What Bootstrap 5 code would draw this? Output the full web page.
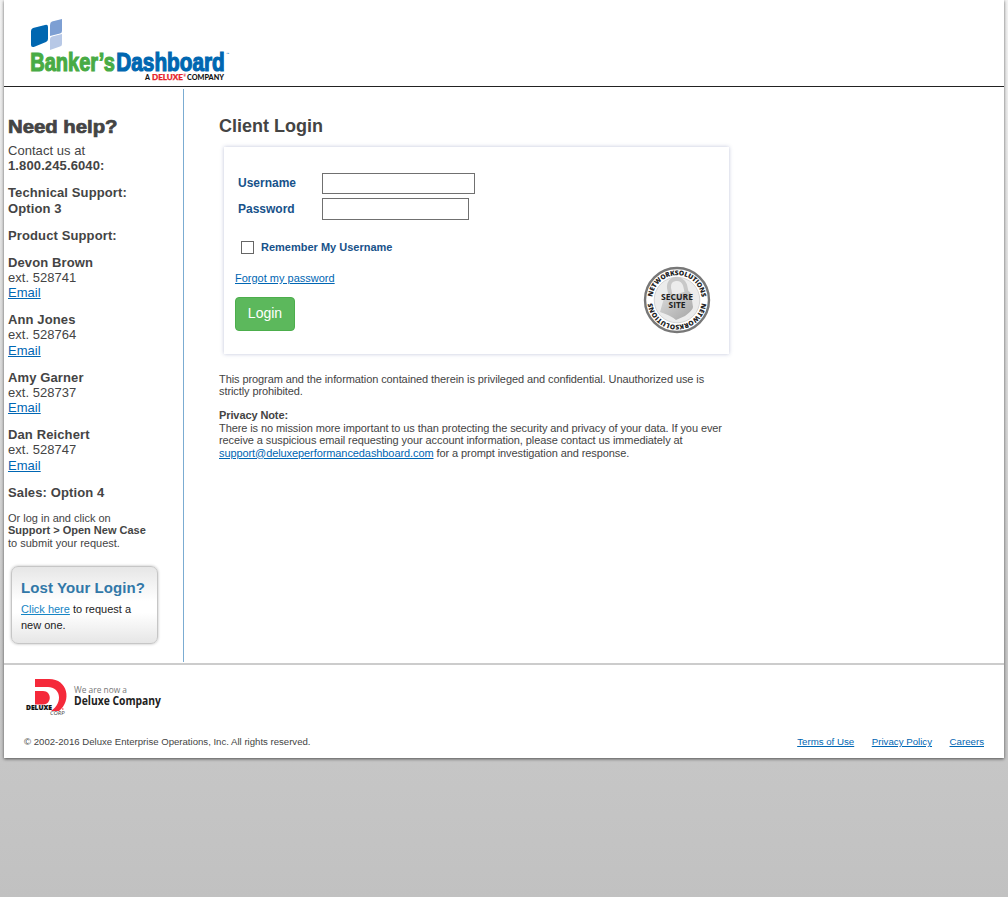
<!DOCTYPE html>
<html lang="en">
<head>
<meta charset="utf-8">
<meta name="viewport" content="width=device-width, initial-scale=1">
<title>Banker's Dashboard - Client Login</title>
<link href="https://cdn.jsdelivr.net/npm/bootstrap@5.3.0/dist/css/bootstrap.min.css" rel="stylesheet">
<style>
html{height:100%}
body{min-height:897px;font-family:"Liberation Sans",Arial,sans-serif;font-size:13px;line-height:15.2px;color:#444;background:linear-gradient(#f2f2f2 0,#c8c8c8 650px,#c6c6c6 760px,#c1c1c1 897px)}
a{color:#0066b3}
p{margin:0 0 12px}
.page{width:1000px;height:758px;margin:0 4px;box-shadow:0 1px 3px rgba(0,0,0,.6)}
.top{height:87px;border-bottom:1px solid #222}
.main{height:576px}
.side{width:180px;margin:2px 0 1px;padding:29px 0 0 4px;border-right:1px solid #7bacd2}
.side h1{line-height:18px;margin:0 0 5px}
.side p{margin-bottom:11.9px}
.side p:not(.tiny) b{letter-spacing:.12px}
.side p:not(.tiny){letter-spacing:.04px}
.tiny{font-size:11px;line-height:12.6px}
.lost{width:147px;height:78px;margin:16.2px 0 0 3px;padding:12px 0 0 9px;border:1px solid #c6c6c6;border-radius:7px;background:linear-gradient(#e6e6e6,#fff 45%,#fff 60%,#e6e6e6);box-shadow:0 0 3px rgba(0,0,0,.28);font-size:11px;line-height:16px;color:#222}
.lost h2{font-size:15px;line-height:18px;font-weight:700;color:#3278a8;margin:0 0 4px;letter-spacing:.08px;white-space:nowrap}
.lost a{color:#1685c4}
.content{padding:30px 0 0 35px}
.content h2{font-size:18px;font-weight:700;line-height:18px;margin:0 0 12px}
.loginbox{width:505px;height:207px;margin-left:5px;padding:26px 18px 0 11px;box-shadow:0 0 4px rgba(60,75,140,.32)}
.loginbox label{color:#17528a;font-weight:700;font-size:12px;line-height:20px;width:87px;padding-left:3px}
.loginbox .pw{line-height:22px}
.field{border:1px solid #707070;background:#fff;padding:0;border-radius:0}
.field-user{width:153px;height:21px}
.field-pass{width:147px;height:22px}
.loginbox label.remember{font-size:11px;width:auto;padding-left:7px}
.check{appearance:none;width:13px;height:13px;border:1px solid #666;background:#fff;margin:0 0 0 6px}
.remember-row{margin-top:17px}
.forgot{margin-top:14px;font-size:11px}
.btn-login{width:60px;height:34px;margin-top:11px;padding:0 0 2px;font-size:14px;line-height:20px;color:#fff;background:#5cb85c;border-color:#4cae4c;border-radius:4px}
.seal{margin-top:93px}
.notice{width:512px;margin-top:19px;font-size:11px;line-height:12.4px;letter-spacing:-.088px}
.notice p{margin-bottom:11.6px}
.notice b{letter-spacing:-.1px}
.foot{height:95px;border-top:2px solid #ccc;padding:10px 20px 0}
.legal{font-size:9.6px;line-height:12px;margin-top:21px}
.legal nav{gap:17.500px;font-size:9.7px}
</style>
</head>
<body>
<div class="page bg-white">
  <header class="top">
    <svg width="240" height="86" class="d-block" role="img" aria-label="Banker's Dashboard">
      <path d="M27 31Q27 29 29 28L41 25Q44 24 44 27V39Q44 41 42 42L31 46.500Q27 48 27 45Z" fill="#0067b1"/>
      <path d="M46 25Q46 22 48 21.500L58 19V31Q58 33 56 33.500L46 36Z" fill="#7d9fd3"/>
      <path d="M46 39Q46 37 48 36.500L58 34V44Q58 46 56 46.500L46 50Z" fill="#b7c8e6"/>
      <g font-family="'Liberation Sans Narrow','Liberation Sans',sans-serif" font-weight="700" font-size="25.500" stroke-width="1.200">
        <text x="26.300" y="70.500" fill="#48ab45" stroke="#48ab45" textLength="84.500" lengthAdjust="spacingAndGlyphs">Banker’s</text>
        <text x="112.300" y="70.500" fill="#0067b1" stroke="#0067b1" textLength="108.500" lengthAdjust="spacingAndGlyphs">Dashboard</text>
      </g>
      <text x="222" y="55" font-size="3.500" fill="#0067b1">™</text>
      <g font-family="Lato,sans-serif" font-size="7" font-weight="900">
        <text x="141" y="80" fill="#111">A</text>
        <text x="148" y="80" fill="#e7242b" stroke="#e7242b" stroke-width=".25" textLength="31" lengthAdjust="spacingAndGlyphs">DELUXE</text>
        <text x="179.500" y="77" font-size="3" fill="#e7242b">®</text>
        <text x="183" y="80" fill="#111" textLength="37" lengthAdjust="spacingAndGlyphs">COMPANY</text>
      </g>
    </svg>
  </header>
  <main class="main d-flex">
    <aside class="side flex-shrink-0">
      <h1><svg width="115" height="20" class="d-block"><text x="0" y="15" font-size="18" font-weight="700" fill="#444" stroke="#444" stroke-width=".7" textLength="109.500" lengthAdjust="spacingAndGlyphs">Need help?</text></svg></h1>
      <p>Contact us at<br><b>1.800.245.6040:</b></p>
      <p><b>Technical Support:<br>Option 3</b></p>
      <p><b>Product Support:</b></p>
      <p><b>Devon Brown</b><br>ext. 528741<br><a href="#">Email</a></p>
      <p><b>Ann Jones</b><br>ext. 528764<br><a href="#">Email</a></p>
      <p><b>Amy Garner</b><br>ext. 528737<br><a href="#">Email</a></p>
      <p><b>Dan Reichert</b><br>ext. 528747<br><a href="#">Email</a></p>
      <p><b>Sales: Option 4</b></p>
      <p class="tiny">Or log in and click on<br><b>Support &gt; Open New Case</b><br>to submit your request.</p>
      <div class="lost"><h2>Lost Your Login?</h2><a href="#">Click here</a> to request a<br>new one.</div>
    </aside>
    <section class="content">
      <h2>Client Login</h2>
      <form class="loginbox d-flex justify-content-between">
        <div>
          <div class="d-flex mb-1"><label for="user">Username</label><input id="user" class="field field-user"></div>
          <div class="d-flex"><label for="pass" class="pw">Password</label><input id="pass" type="password" class="field field-pass"></div>
          <div class="remember-row d-flex align-items-center"><input id="rem" type="checkbox" class="check"><label for="rem" class="remember">Remember My Username</label></div>
          <div class="forgot"><a href="#">Forgot my password</a></div>
          <button type="button" class="btn btn-login">Login</button>
        </div>
        <svg width="68" height="68" viewBox="0 0 68 68" class="seal" role="img" aria-label="Secure Site">
          <defs>
            <path id="arcTop" d="M9.200 34A24.800 24.800 0 0 1 58.800 34"/>
            <path id="arcBottom" d="M58.800 34A24.800 24.800 0 0 1 9.200 34"/>
            <linearGradient id="lock" x2="1" y2="1"><stop stop-color="#ddd"/><stop offset="1" stop-color="#a5a5a5"/></linearGradient>
          </defs>
          <circle cx="34" cy="34" r="32" fill="#fff" stroke="#777" stroke-width="2.400"/>
          <circle cx="34" cy="34" r="22.800" fill="#ececec" stroke="#ccc" stroke-width=".8"/>
          <path d="M28 32L26 22C25 11 39 10 42 19L44 28" fill="none" stroke="#c8c8c8" stroke-width="4"/>
          <path d="M21 32L44 25Q47 25 48 28L50 41Q50 44 42 50L33 54Q27 49 17 46Z" fill="url(#lock)"/>
          <g font-family="'Open Sans',sans-serif" font-weight="800" fill="#222">
            <g font-size="6.700" letter-spacing="-.17">
              <text text-anchor="middle"><textPath href="#arcTop" startOffset="50%">NETWORKSOLUTIONS</textPath></text>
              <text text-anchor="middle"><textPath href="#arcBottom" startOffset="50%">NETWORKSOLUTIONS</textPath></text>
            </g>
            <g font-size="8.800" font-weight="700" text-anchor="middle"><text x="34" y="33.500" textLength="32" lengthAdjust="spacingAndGlyphs">SECURE</text><text x="34" y="42" textLength="17" lengthAdjust="spacingAndGlyphs">SITE</text></g>
          </g>
        </svg>
      </form>
      <div class="notice">
        <p class="text-nowrap">This program and the information contained therein is privileged and confidential. Unauthorized use is<br>strictly prohibited.</p>
        <p class="text-nowrap"><b>Privacy Note:</b><br>There is no mission more important to us than protecting the security and privacy of your data. If you ever<br>receive a suspicious email requesting your account information, please contact us immediately at<br><a href="#">support@deluxeperformancedashboard.com</a> for a prompt investigation and response.</p>
      </div>
    </section>
  </main>
  <footer class="foot">
    <svg width="145" height="40" class="d-block" role="img" aria-label="We are now a Deluxe Company">
      <path d="M11 4H25C44 4 48 26 35 36H27C40 27 36 12 24 12H11Z" fill="#f5293a"/>
      <path d="M11 16H19C28 16 28 29.500 19 29.500H11Z" fill="#f5293a"/>
      <text x="2" y="34.800" font-family="'Open Sans',sans-serif" font-weight="800" font-size="6" fill="#111" stroke="#111" stroke-width=".2" textLength="26" lengthAdjust="spacingAndGlyphs">DELUXE</text>
      <text x="26" y="39.800" font-family="'Open Sans',sans-serif" font-style="italic" font-size="4.800" fill="#444" textLength="14.500" lengthAdjust="spacingAndGlyphs">CORP</text>
      <circle cx="38.800" cy="34" r=".8" fill="#f5293a"/>
      <text x="50" y="18" font-family="'Open Sans',sans-serif" font-size="8.500" fill="#777" textLength="53" lengthAdjust="spacingAndGlyphs">We are now a</text>
      <text x="50" y="30" font-family="'Open Sans',sans-serif" font-weight="700" font-size="12" fill="#222" textLength="87" lengthAdjust="spacingAndGlyphs">Deluxe Company</text>
    </svg>
    <div class="legal d-flex justify-content-between"><span>© 2002-2016 Deluxe Enterprise Operations, Inc. All rights reserved.</span>
      <nav class="d-flex"><a href="#">Terms of Use</a><a href="#">Privacy Policy</a><a href="#">Careers</a></nav></div>
  </footer>
</div>
<script src="https://cdn.jsdelivr.net/npm/bootstrap@5.3.0/dist/js/bootstrap.bundle.min.js"></script>
</body>
</html>
